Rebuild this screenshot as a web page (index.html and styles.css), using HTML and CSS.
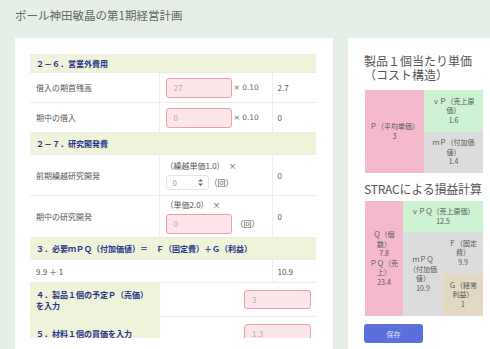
FILE: index.html
```html
<!DOCTYPE html>
<html lang="ja">
<head>
<meta charset="utf-8">
<title>経営計画</title>
<link rel="stylesheet" href="styles.css">
</head>
<body>
<h1 class="title">ポール神田敏晶の第1期経営計画</h1>
<div class="layout">
  <section class="card main">
    <div class="scroll">
      <table class="plan">
        <colgroup><col class="c1"><col class="c2"><col class="c3"></colgroup>
        <tr class="sec h18"><td colspan="3">２－６．営業外費用</td></tr>
        <tr class="h30">
          <td>借入の期首残高</td>
          <td><span class="inp">27</span><span class="mul">× 0.10</span></td>
          <td>2.7</td>
        </tr>
        <tr class="h30">
          <td>期中の借入</td>
          <td><span class="inp">0</span><span class="mul">× 0.10</span></td>
          <td>0</td>
        </tr>
        <tr class="sec h22"><td colspan="3">２－７．研究開発費</td></tr>
        <tr class="h41">
          <td>前期繰越研究開発</td>
          <td>
            <div class="line">（繰越単価1.0）　×</div>
            <div class="line"><span class="spin">0<svg class="arrows" width="5" height="7" viewBox="0 0 5 7"><path d="M2.5 0 L5 2.6 H0 Z M2.5 7 L5 4.4 H0 Z" fill="#666"/></svg></span><span class="unit">（回）</span></div>
          </td>
          <td>0</td>
        </tr>
        <tr class="h42">
          <td>期中の研究開発</td>
          <td>
            <div class="line">（単価2.0）　×</div>
            <div class="line"><span class="inp">0</span><span class="unit u2">（回）</span></div>
          </td>
          <td>0</td>
        </tr>
        <tr class="sec h22"><td colspan="3">３．必要ｍＰＱ（付加価値）＝　Ｆ（固定費）＋Ｇ（利益）</td></tr>
        <tr class="h23">
          <td colspan="2">9.9 ＋ 1</td>
          <td>10.9</td>
        </tr>
        <tr class="h34">
          <td class="lab">４．製品１個の予定Ｐ（売価）を入力</td>
          <td colspan="2" class="right"><span class="inp wide">3</span></td>
        </tr>
        <tr class="h34">
          <td class="lab">５．材料１個の買価を入力</td>
          <td colspan="2" class="right"><span class="inp wide">1.3</span></td>
        </tr>
      </table>
    </div>
  </section>
  <aside class="card side">
    <h2 class="heading">製品１個当たり単価（コスト構造）</h2>
    <div class="chart unit-chart">
      <div class="cell pink p-col"><div>Ｐ（平均単価）</div><div>3</div></div>
      <div class="stack">
        <div class="cell green"><div>ｖＰ（売上原価）</div><div>1.6</div></div>
        <div class="cell gray"><div>ｍＰ（付加価値）</div><div>1.4</div></div>
      </div>
    </div>
    <h2 class="heading second">STRACによる損益計算</h2>
    <div class="chart strac-chart">
      <div class="cell pink q-col"><div>Ｑ（個数）</div><div>7.8</div><div>ＰＱ（売上）</div><div>23.4</div></div>
      <div class="stack">
        <div class="cell green vpq"><div>ｖＰＱ（売上原価）</div><div>12.5</div></div>
        <div class="lower">
          <div class="cell gray mpq"><div>ｍＰＱ（付加価値）</div><div>10.9</div></div>
          <div class="stack">
            <div class="cell gray"><div>Ｆ（固定費）</div><div>9.9</div></div>
            <div class="cell tan"><div>Ｇ（経常利益）</div><div>1</div></div>
          </div>
        </div>
      </div>
    </div>
    <button class="save">保存</button>
  </aside>
</div>
</body>
</html>
```
FILE: styles.css
```css
html, body {
  margin: 0;
  padding: 0;
}
body {
  background: #e5eee7;
  font-family: "DejaVu Sans", "Noto Sans CJK JP", sans-serif;
  overflow: hidden;
  padding: 0 15px;
  height: 349px;
}
.title {
  font-family: "Noto Sans CJK JP", sans-serif;
  font-weight: normal;
  font-size: 11.5px;
  line-height: 16px;
  color: #666;
  margin: 7px 0 15px;
}
.layout {
  display: flex;
  gap: 15px;
  align-items: flex-start;
}
.card {
  background: #fff;
  flex-shrink: 0;
  min-height: 330px;
  box-sizing: border-box;
}
.main {
  width: 318px;
  padding: 16px 15px;
}
.scroll {
  height: 284px;
  overflow: hidden;
}
.plan {
  width: 286px;
  border-collapse: collapse;
  table-layout: fixed;
  font-size: 8px;
  color: #555;
}
.c1 { width: 129px; }
.c2 { width: 113px; }
.c3 { width: 44px; }
.plan td {
  padding: 0 6px;
  border-top: 1px solid #ececec;
  border-left: 1px solid #efefef;
  vertical-align: middle;
  line-height: 11px;
  font-family: "Noto Sans CJK JP", sans-serif;
}
.plan td:first-child { border-left: none; }
.plan td:nth-child(3), .plan td[colspan="2"] + td { padding-left: 5px; }
.h18 { height: 18px; }
.h22 { height: 22px; }
.h23 { height: 23px; }
.h30 { height: 30px; }
.h41 { height: 41px; }
.h42 { height: 42px; }
.h34 { height: 34px; }
.sec td {
  background: #eef3d9;
  color: #26328c;
  font-weight: bold;
  border-left: none;
}
.plan td.lab {
  background: #eef3d9;
  color: #26328c;
  font-weight: bold;
}
.plan td.right {
  text-align: right;
  padding-right: 5px;
}
.inp {
  display: inline-flex;
  align-items: center;
  box-sizing: border-box;
  width: 66px;
  height: 20px;
  padding-left: 7px;
  background: #fde6ea;
  border: 1px solid #e6a2ab;
  border-radius: 3px;
  color: #aaa;
  vertical-align: middle;
  text-align: left;
}
.inp.wide {
  width: 67px;
  height: 19px;
}
.mul {
  margin-left: 2px;
  vertical-align: middle;
  font-family: "DejaVu Sans", sans-serif;
  font-size: 7.5px;
  color: #666;
}
.line {
  display: flex;
  align-items: center;
  line-height: 12px;
}
.line + .line { margin-top: 3px; }
.spin {
  display: inline-flex;
  align-items: center;
  justify-content: space-between;
  box-sizing: border-box;
  width: 43px;
  height: 15px;
  padding: 0 5px 0 6px;
  border: 1px solid #e3e3e3;
  border-radius: 3px;
  color: #999;
}
.unit { margin-left: 1px; }
.u2 { margin-left: 4px; }
.side {
  width: 152px;
  padding: 16px;
}
.heading {
  font-family: "Noto Sans CJK JP", sans-serif;
  font-weight: normal;
  font-size: 12px;
  line-height: 14px;
  color: #555;
  margin: 0 0 8px;
}
.heading.second {
  margin: 9px 0 5px;
  white-space: nowrap;
  letter-spacing: -0.2px;
}
.chart {
  display: flex;
  width: 118px;
  margin-left: 1px;
  font-family: "Noto Sans CJK JP", sans-serif;
  font-size: 7px;
  line-height: 9.5px;
  color: #555;
}
.unit-chart { height: 83px; }
.strac-chart { height: 115px; }
.cell {
  display: flex;
  flex-direction: column;
  justify-content: center;
  align-items: center;
  text-align: center;
  padding: 0 4px;
  box-sizing: border-box;
}
.stack {
  display: flex;
  flex-direction: column;
  flex: 1;
}
.stack > .cell { flex: 1; }
.pink { background: #f5b9cd; }
.green { background: #cdf2d2; }
.gray { background: #dcdcdc; }
.tan { background: #e3d8c2; }
.p-col { width: 59px; }
.q-col { width: 38px; }
.stack > .vpq { flex: 0 0 31px; }
.lower {
  display: flex;
  flex: 1;
}
.mpq { width: 40px; }
.save {
  display: block;
  margin-top: 8px;
  width: 59px;
  height: 19px;
  border: none;
  border-radius: 3px;
  background: #5b6fdd;
  color: #dfe3fb;
  font-family: "Noto Sans CJK JP", sans-serif;
  font-size: 7px;
  padding: 0;
}
```
